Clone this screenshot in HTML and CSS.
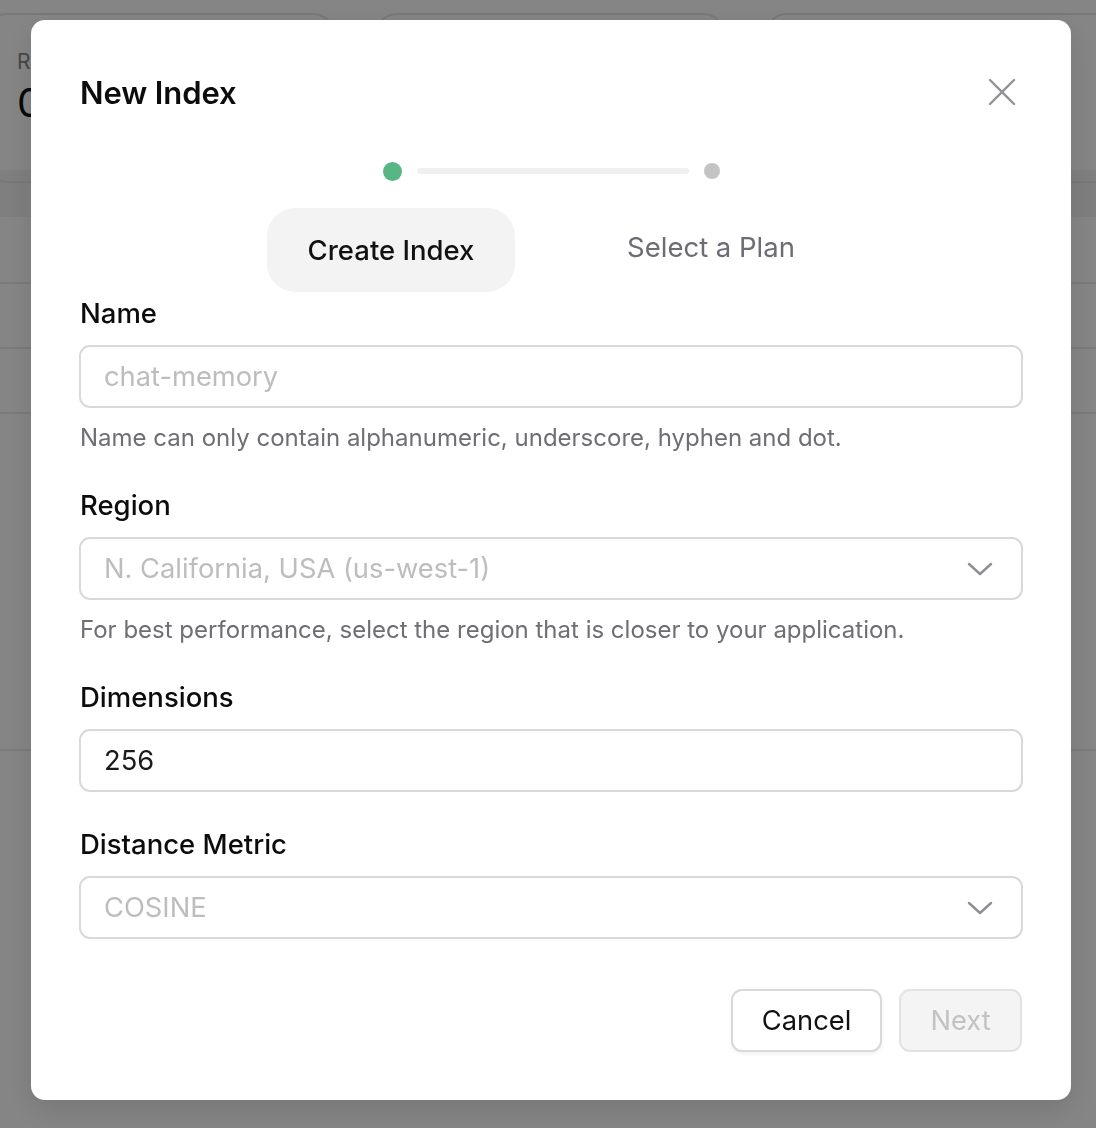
FILE: index.html
```html
<!DOCTYPE html>
<html lang="en">
<head>
<meta charset="utf-8">
<title>New Index</title>
<link rel="stylesheet" href="styles.css">
</head>
<body>
<div class="page">
  <div class="cards">
    <div class="card"><div class="card-label">REQUESTS</div><div class="card-value">0</div></div>
    <div class="card"><div class="card-label">BANDWIDTH</div><div class="card-value">0</div></div>
    <div class="card"><div class="card-label">STORAGE</div><div class="card-value">0</div></div>
  </div>
  <div class="table">
    <div class="table-head"></div>
    <div class="table-row r1"></div>
    <div class="table-row r2"></div>
    <div class="table-row r3"></div>
    <div class="table-row r4"></div>
  </div>
</div>

<div class="overlay">
  <div class="dialog">
    <div class="header">
      <h1 class="title">New Index</h1>
      <button class="close" aria-label="Close">
        <svg width="28" height="28" viewBox="0 0 28 28"><path d="M2 2 L26 26 M26 2 L2 26" stroke="#929298" stroke-width="2.4" stroke-linecap="round" fill="none"/></svg>
      </button>
    </div>

    <div class="stepper">
      <span class="dot dot-active"></span>
      <span class="track"></span>
      <span class="dot dot-idle"></span>
    </div>

    <div class="tabs">
      <div class="tab-cell"><div class="tab tab-active">Create Index</div></div>
      <div class="tab-cell"><div class="tab tab-idle">Select a Plan</div></div>
    </div>

    <div class="field">
      <div class="label">Name</div>
      <div class="input placeholder">chat-memory</div>
      <div class="help">Name can only contain alphanumeric, underscore, hyphen and dot.</div>
    </div>

    <div class="field">
      <div class="label">Region</div>
      <div class="input select placeholder">
        <span>N. California, USA (us-west-1)</span>
        <svg class="chev" width="26" height="16" viewBox="0 0 26 16"><path d="M2 3 L13 13 L24 3" stroke="#8e8e94" stroke-width="2.4" stroke-linecap="round" stroke-linejoin="round" fill="none"/></svg>
      </div>
      <div class="help">For best performance, select the region that is closer to your application.</div>
    </div>

    <div class="field">
      <div class="label">Dimensions</div>
      <div class="input value">256</div>
    </div>

    <div class="field field-last">
      <div class="label">Distance Metric</div>
      <div class="input select placeholder">
        <span>COSINE</span>
        <svg class="chev" width="26" height="16" viewBox="0 0 26 16"><path d="M2 3 L13 13 L24 3" stroke="#8e8e94" stroke-width="2.4" stroke-linecap="round" stroke-linejoin="round" fill="none"/></svg>
      </div>
    </div>

    <div class="actions">
      <button class="btn btn-cancel">Cancel</button>
      <button class="btn btn-next">Next</button>
    </div>
  </div>
</div>
</body>
</html>
```

FILE: styles.css
```css
* { box-sizing: border-box; }
html, body { margin: 0; padding: 0; }
body {
  width: 1096px;
  height: 1128px;
  overflow: hidden;
  background: #ffffff;
  font-family: "Inter", "Noto Sans", "Liberation Sans", sans-serif;
  color: #111;
}

/* underlying page */
.page { padding-top: 13px; }
.cards {
  display: grid;
  grid-template-columns: 350px 350px 350px;
  gap: 40px;
  margin-left: -15px;
  height: 157px;
}
.card {
  border: 2px solid #e6e6e6;
  border-radius: 22px;
  padding: 34px 30px;
  height: 170px;
}
.card-label { font-size: 21px; color: #888; letter-spacing: 0.5px; }
.card-value { font-size: 40px; color: #111; margin-top: 4px; }
.table-head { height: 47px; background: #f4f4f4; }
.table-row { border-bottom: 2px solid #ebebeb; }
.r1 { height: 67px; }
.r2 { height: 65px; }
.r3 { height: 65px; }
.r4 { height: 337px; }

/* overlay + dialog */
.overlay {
  position: fixed;
  inset: 0;
  background: rgba(0, 0, 0, 0.48);
  padding: 20px 0 0 31px;
}
.dialog {
  width: 1040px;
  height: 1080px;
  background: #fff;
  border-radius: 14px;
  padding: 48px 48px 49px 48px;
  box-shadow: 0 10px 30px rgba(0, 0, 0, 0.12);
}

.header {
  height: 48px;
  display: flex;
  align-items: center;
  justify-content: space-between;
  padding-left: 1px;
}
.title {
  margin: 0;
  font-size: 31px;
  font-weight: 600;
  color: #0c0c0c;
  letter-spacing: -0.1px;
}
.close {
  border: 0;
  background: none;
  padding: 0;
  width: 28px;
  height: 28px;
  margin-right: 7px;
  display: flex;
}

.stepper {
  margin-top: 46px;
  height: 18px;
  display: flex;
  align-items: center;
  justify-content: center;
}
.dot { display: block; border-radius: 50%; }
.dot-active { width: 19px; height: 19px; background: #58b685; }
.dot-idle { width: 16px; height: 16px; background: #c4c4c4; }
.track {
  display: block;
  width: 272px;
  height: 6px;
  border-radius: 3px;
  background: #f0f0f0;
  margin: 0 15px;
}

.tabs {
  margin-top: 28px;
  display: grid;
  grid-template-columns: 320px 320px;
  justify-content: center;
}
.tab-cell { display: flex; justify-content: center; }
.tab {
  height: 84px;
  display: flex;
  align-items: center;
  justify-content: center;
  font-size: 27.5px;
}
.tab-active {
  width: 248px;
  background: #f3f3f3;
  border-radius: 28px;
  color: #111;
  font-weight: 500;
}
.tab-idle {
  color: #6c6c74;
  padding-bottom: 7px;
}

.field { margin-top: 36px; }
.tabs + .field { margin-top: 5px; }
.field-last + .actions { margin-top: 50px; }
.label {
  font-size: 27.5px;
  font-weight: 500;
  line-height: 32px;
  color: #0c0c0c;
  margin-bottom: 16px;
  padding-left: 1px;
}
.input {
  height: 63px;
  border: 2px solid #d9d9dc;
  border-radius: 11px;
  padding: 0 23px;
  display: flex;
  align-items: center;
  font-size: 27.3px;
}
.placeholder { color: #bdbdbf; }
.value { color: #1a1a1a; }
.select { justify-content: space-between; padding-right: 28px; }
.chev { display: block; }
.help {
  margin-top: 15px;
  font-size: 24px;
  line-height: 30px;
  color: #6e6e73;
  padding-left: 1px;
}

.actions {
  display: flex;
  justify-content: flex-end;
  gap: 17px;
  padding-right: 1px;
}
.btn {
  height: 63px;
  border-radius: 11px;
  font-family: inherit;
  font-size: 27.3px;
  padding: 0;
}
.btn-cancel {
  width: 151px;
  background: #fff;
  border: 2px solid #d9d9d9;
  color: #111;
  box-shadow: 0 2px 4px rgba(0, 0, 0, 0.06);
}
.btn-next {
  width: 123px;
  background: #f4f4f5;
  border: 2px solid #e2e2e4;
  color: #c2c2c4;
}
```
